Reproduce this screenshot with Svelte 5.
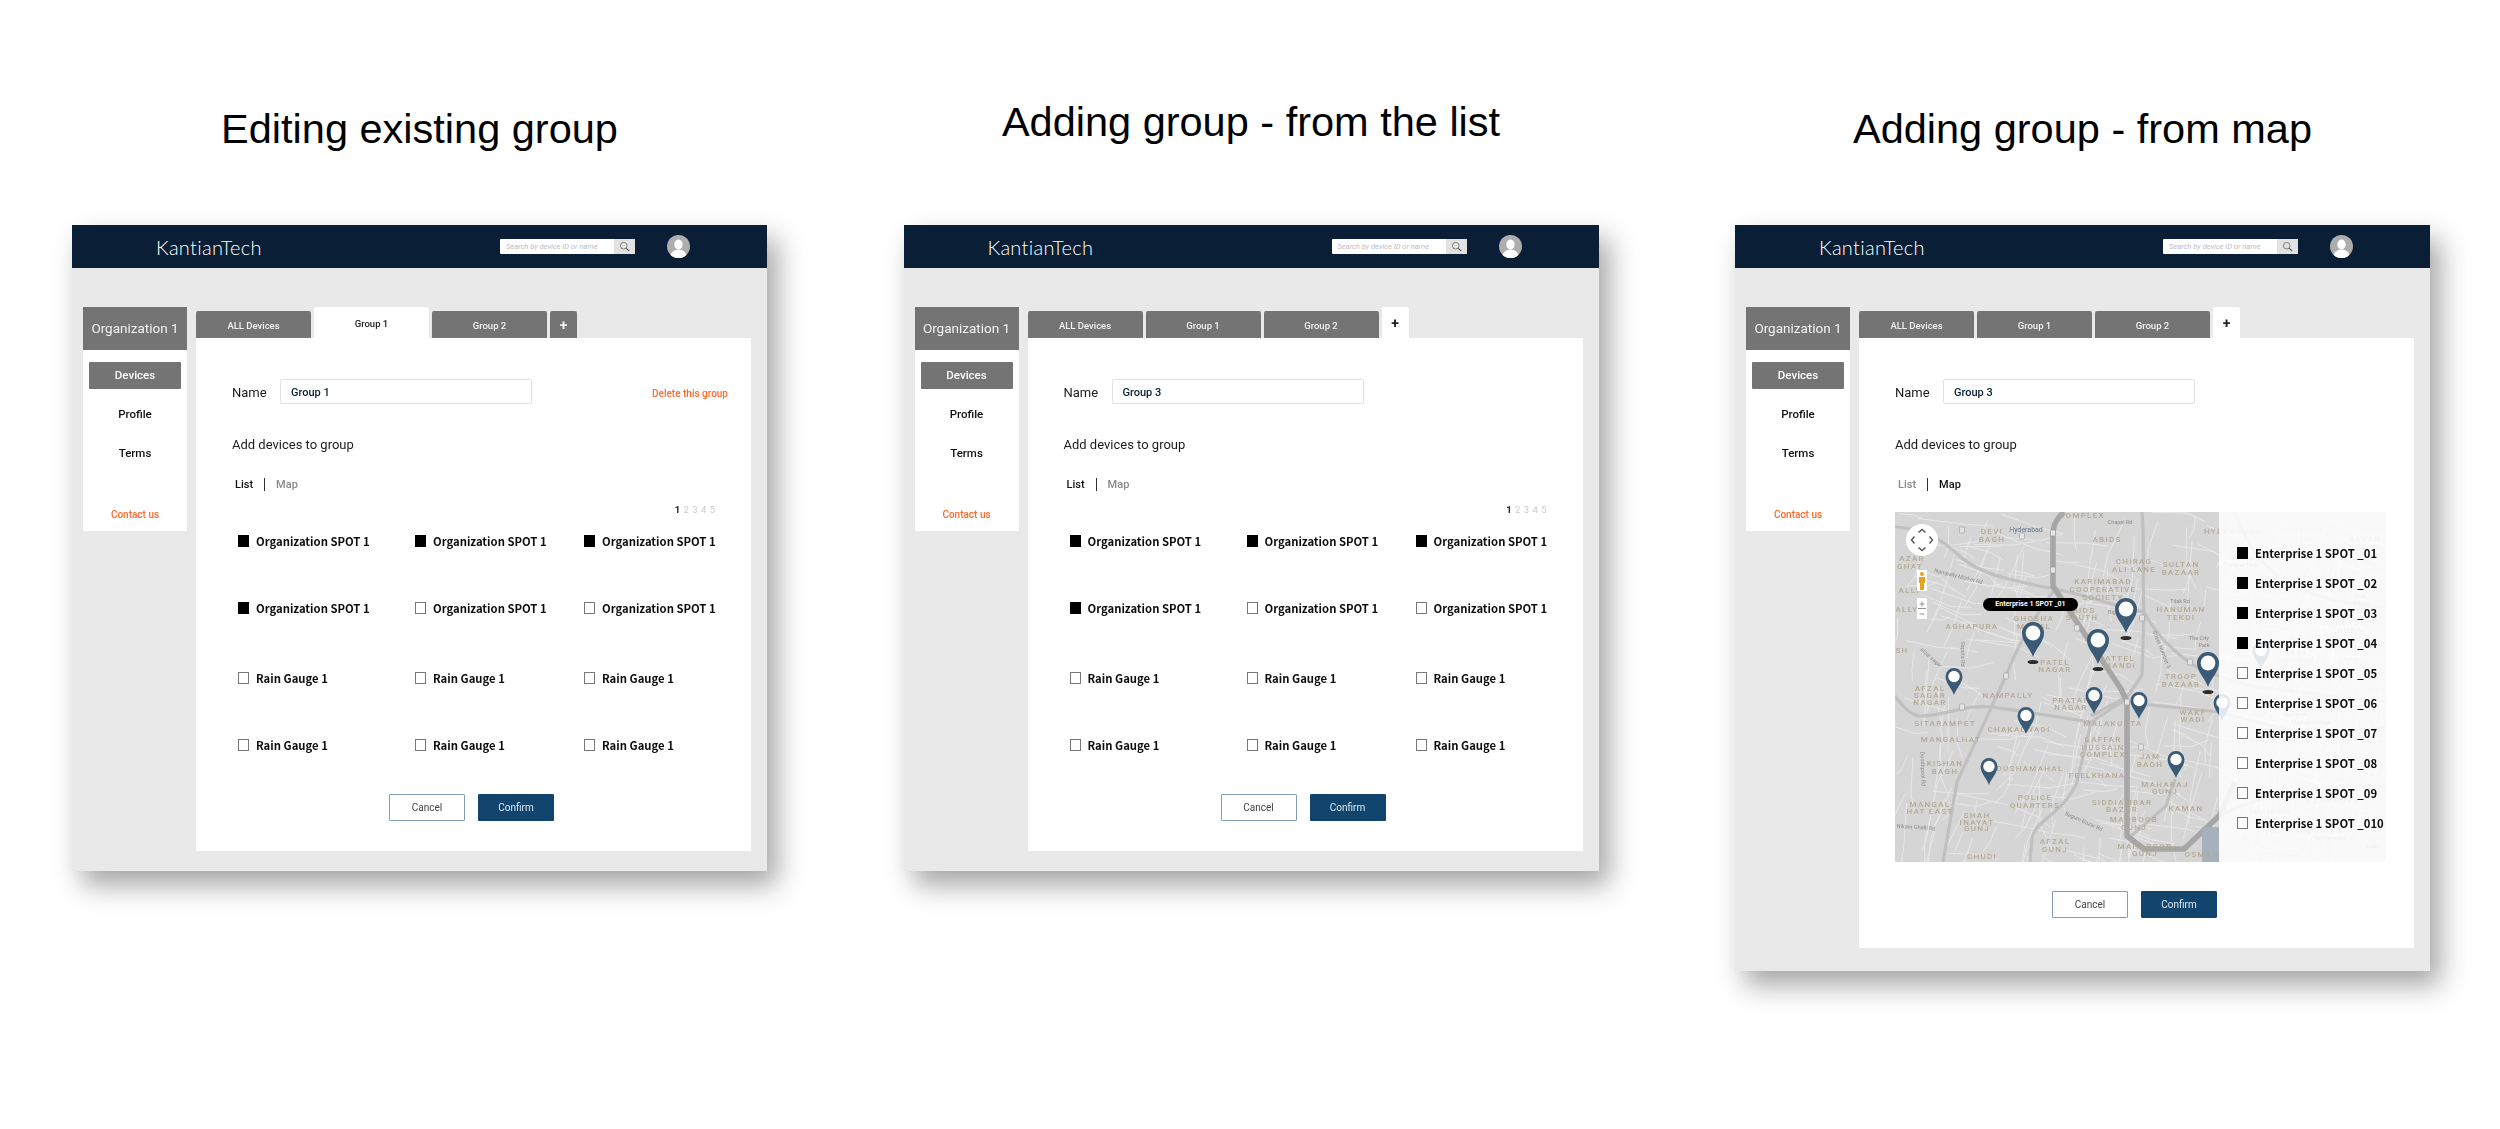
<script>
  const orgRows = [
    ["Organization SPOT 1", true],
    ["Organization SPOT 1", true],
    ["Organization SPOT 1", true],
    ["Organization SPOT 1", true],
    ["Organization SPOT 1", false],
    ["Organization SPOT 1", false],
    ["Rain Gauge 1", false],
    ["Rain Gauge 1", false],
    ["Rain Gauge 1", false],
    ["Rain Gauge 1", false],
    ["Rain Gauge 1", false],
    ["Rain Gauge 1", false]
  ];

  const spots = ["_01", "_02", "_03", "_04", "_05", "_06", "_07", "_08", "_09", "_010"];

  const panels = [
    { title: "Editing existing group", name: "Group 1", activeTab: "Group 1", del: true, view: "list", titleCls: "" },
    { title: "Adding group - from the list", name: "Group 3", activeTab: "+", del: false, view: "list", titleCls: "high" },
    { title: "Adding group - from map", name: "Group 3", activeTab: "+", del: false, view: "map", titleCls: "" }
  ];

  const tabs = ["ALL Devices", "Group 1", "Group 2", "+"];

  // street texture for the map, seeded so it is the same every run
  function makeStreets() {
    let seed = 17;
    const rnd = () => {
      seed = (seed * 16807) % 2147483647;
      return seed / 2147483647;
    };
    const out = [];
    for (let i = 0; i < 420; i++) {
      const x = rnd() * 491;
      const y = rnd() * 350;
      const base = rnd() < 0.5 ? 0.25 : 1.8;
      const a = base + (rnd() - 0.5) * 0.5;
      const len = 12 + rnd() * 36;
      const mx = x + Math.cos(a) * len;
      const my = y + Math.sin(a) * len;
      const a2 = a + (rnd() - 0.5) * 0.9;
      const ex = mx + Math.cos(a2) * len * 0.6;
      const ey = my + Math.sin(a2) * len * 0.6;
      out.push(`M${x.toFixed(1)} ${y.toFixed(1)}L${mx.toFixed(1)} ${my.toFixed(1)}L${ex.toFixed(1)} ${ey.toFixed(1)}`);
    }
    return out.join("");
  }
  const streets = makeStreets();

  const areaLabels = [
    ["COMPLEX", 187, 6], ["DEVI", 97, 22], ["BAGH", 97, 30], ["ABIDS", 212, 30], ["HYDERGUDA", 338, 22],
    ["CHIRAG", 239, 52], ["ALI LANE", 239, 60], ["SULTAN", 286, 55], ["BAZAAR", 286, 63],
    ["KARIMABAD", 208, 72], ["COOPERATIVE", 208, 80], ["SOCIETY", 208, 88],
    ["AZAR", 17, 49], ["GHAT", 15, 57], ["ALLY", 15, 81], ["ALLY", 12, 100],
    ["AGHAPURA", 77, 117], ["GHOSHA", 139, 109], ["MAHAL", 139, 117], ["BIDS", 189, 101], ["SOUTH", 187, 108],
    ["HANUMAN", 286, 100], ["TEKDI", 286, 108], ["PATEL", 160, 153], ["NAGAR", 160, 160],
    ["PATTEL", 222, 149], ["MANDI", 225, 156], ["TROOP", 286, 167], ["BAZAAR", 286, 175],
    ["SH", 7, 141], ["AFZAL", 35, 179], ["SAGAR", 35, 186], ["NAGAR", 35, 193], ["NAMPALLY", 113, 186],
    ["PRATAP", 176, 191], ["NAGAR", 176, 198], ["WAKF", 298, 203], ["WADI", 298, 210],
    ["SITARAMPET", 50, 214], ["MALAKUNTA", 218, 214], ["CHAKALWADI", 124, 220], ["MANGALHAT", 56, 230],
    ["GAFFAR", 208, 230], ["HUSSAIN", 208, 238], ["COMPLEX", 208, 245], ["JAM", 255, 247], ["BAGH", 255, 255],
    ["KISHAN", 50, 254], ["BAGH", 50, 262], ["DUSHAMAHAL", 135, 259], ["FEELKHANA", 202, 266],
    ["MAHARAJ", 270, 275], ["GUNJ", 270, 282], ["POLICE", 140, 288], ["QUARTERS", 140, 296],
    ["SIDDIAMBAR", 227, 293], ["BAZAR", 227, 300], ["KAMAN", 291, 299], ["MANGAL", 35, 295], ["HAT EAST", 35, 302],
    ["SHAH", 82, 306], ["INAYAT", 82, 313], ["GUNJ", 82, 319], ["MAHBOOB", 239, 310], ["GUNJ", 239, 318],
    ["AFZAL", 160, 332], ["GUNJ", 160, 340], ["MAHABOOB", 250, 337], ["GUNJ", 250, 344], ["CHUDI", 87, 347], ["OSMAN", 307, 345],
    ["KUTBI", 455, 113], ["GUDA", 455, 121], ["BADI", 400, 143], ["CHOWDI", 400, 151], ["PUTLIBOWLI", 378, 230],
    ["AZAMPURA", 438, 291], ["IMLIBUN", 375, 302], ["SULTANPURA", 400, 321], ["BASAN", 470, 30], ["NAGAR", 470, 37]
  ];

  const roadLabels = [
    ["Chapel Rd", 225, 12, 0], ["Tilak Rd", 285, 91, 0], ["Nampally Market Rd", 63, 66, 14], ["Street Number 5", 265, 138, 68],
    ["afzal sagar", 35, 147, 42], ["Sapota Rd", 66, 142, 90], ["Doodhpool Rd", 26, 257, 88], ["Begum Bazar Rd", 188, 311, 24],
    ["Nikam Ghalli Rd", 21, 317, 4], ["The City", 304, 128, 0], ["Park", 309, 135, 0], ["Big", 217, 102, 0],
    ["Hotel", 465, 86, 0], ["Arihant", 466, 93, 0], ["Osmania", 400, 204, 0], ["Medical College", 416, 212, 0],
    ["The Hamdam", 434, 328, 0], ["Daily", 478, 336, 0], ["Overhead", 349, 48, 0], ["Water Tank", 349, 55, 0]
  ];

  // little route shields along the roads
  const shields = [[67, 18], [127, 24], [158, 21], [158, 58], [182, 116], [247, 106], [111, 164], [67, 195], [232, 190], [295, 150], [246, 235]];

  const bigPins = [[138, 145], [203, 152], [231, 121], [313, 175]];
  const smallPins = [[59, 183], [199, 202], [244, 207], [131, 222], [94, 273], [281, 266], [327, 209], [366, 157]];
</script>

{#snippet pin(x, y, scale)}
  <g transform="translate({x} {y}) scale({scale})">
    <path d="M0 0C-3-9-11-15-11-24A11 11 0 1 1 11-24C11-15 3-9 0 0Z" fill="#3a5a76" />
    <circle cx="0" cy="-24" r="7.4" fill="#fff" />
  </g>
{/snippet}

{#snippet mapView()}
  <div class="map">
    <svg class="map-art" viewBox="0 0 491 350" width="491" height="350" xmlns="http://www.w3.org/2000/svg">
      <rect width="491" height="350" fill="#d5d5d5" />
      <path d={streets} fill="none" stroke="#e9e9e9" stroke-width="0.9" />

      <!-- Roads -->
      <g fill="none" stroke="#c0c0c0" stroke-width="3.2" stroke-linejoin="round">
        <path d="M0 15C22 16 40 22 60 40C78 58 100 66 160 77C195 84 225 96 249 100" />
        <path d="M247 0C250 30 247 70 249 100C262 125 280 140 294 150C305 158 315 162 360 175L491 190" />
        <path d="M0 184C8 196 18 204 26 204C50 204 70 192 97 195L196 210L227 190L324 200L420 225L491 215" />
        <path d="M160 77C135 110 120 140 111 164L97 194L62 270L48 350" />
        <path d="M196 210L182 270C170 300 138 310 137 327L135 350" />
        <path d="M249 100L247 163L233 184L196 204" />
        <path d="M280 267L271 294L236 324" />
        <path d="M340 0C360 60 400 90 491 95" />
        <path d="M324 304C370 280 430 270 491 275" />
      </g>
      <path d="M169 0C160 8 158 14 158 24V74L226 177L232 190V324L249 337H289L324 304L340 270" fill="none" stroke="#a6a6a6" stroke-width="5.5" stroke-linejoin="round" />
      <rect x="307" y="315" width="17" height="35" fill="#a5b1bd" />
      {#each shields as [x, y]}
        <rect x={x - 2.5} y={y - 3} width="5" height="6" rx="1" fill="#e4e4e4" stroke="#999" stroke-width="0.6" />
      {/each}

      <!-- Labels -->
      <g class="area">
        {#each areaLabels as [t, x, y]}
          <text {x} {y} text-anchor="middle">{t}</text>
        {/each}
      </g>
      <g class="road">
        {#each roadLabels as [t, x, y, r]}
          <text {x} {y} text-anchor="middle" transform="rotate({r} {x} {y})">{t}</text>
        {/each}
      </g>
      <text class="city" x="131" y="20" text-anchor="middle">Hyderabad</text>

      <!-- Pins -->
      {#each bigPins as [x, y]}
        <ellipse cx={x} cy={y + 5} rx="5.5" ry="2" fill="#2b2b2b" />
        {@render pin(x, y, 1)}
      {/each}
      {#each smallPins as [x, y]}
        {@render pin(x, y, 0.77)}
      {/each}

      <!-- Map controls -->
      <circle cx="27" cy="28" r="16" fill="#fff" />
      <path d="M23.500 20.500l3.500-3 3.500 3M23.500 35.500l3.500 3 3.500-3M19.500 24.500l-3 3.500 3 3.500M34.500 24.500l3 3.500-3 3.500" fill="none" stroke="#555" stroke-width="1.400" />
      <rect x="22" y="58" width="10" height="21" rx="1" fill="#fff" />
      <circle cx="27" cy="62" r="2" fill="#e9a21b" />
      <path d="M24 65h6v6h-1v7h-4v-7h-1z" fill="#e9a21b" />
      <rect x="22" y="86" width="10" height="21" rx="1" fill="#fff" />
      <path d="M24.500 92h5M27 89.500v5M24.500 102h5M23 96.500h8" stroke="#888" stroke-width="0.900" fill="none" />

      <!-- Side list backdrop -->
      <rect x="324" y="0" width="167" height="350" fill="#fff" fill-opacity="0.86" />
    </svg>

    <div class="map-tip">Enterprise 1 SPOT _01</div>

    <ul class="spot-list">
      {#each spots as s, i}
        <li class="device">
          <span class="check" class:on={i < 4}></span>
          <span>Enterprise 1 SPOT {s}</span>
        </li>
      {/each}
    </ul>
  </div>
{/snippet}

{#snippet listView()}
  <div class="pager"><b>1</b> 2 3 4 5</div>
  <div class="device-grid">
    {#each orgRows as [label, on]}
      <div class="device">
        <span class="check" class:on></span>
        <span>{label}</span>
      </div>
    {/each}
  </div>
{/snippet}

<div class="page">
  {#each panels as p}
    <section class="col">
      <h1 class={p.titleCls}>{p.title}</h1>
      <div class="window">
        <header class="topbar">
          <div class="logo">KantianTech</div>
          <div class="search">
            <span class="placeholder">Search by device ID or name</span>
            <span class="search-btn">
              <svg viewBox="0 0 14 14" width="11" height="11">
                <circle cx="6" cy="6" r="4.2" fill="none" stroke="#666" stroke-width="1" />
                <path d="M9 9l4 4" stroke="#555" stroke-width="1.300" />
              </svg>
            </span>
          </div>
          <svg class="avatar" viewBox="0 0 23 23" width="23" height="23">
            <defs><clipPath id="av"><circle cx="11.500" cy="11.500" r="11.500" /></clipPath></defs>
            <circle cx="11.500" cy="11.500" r="11.500" fill="#adadad" />
            <g clip-path="url(#av)" fill="#fff">
              <ellipse cx="11.500" cy="9.500" rx="4.200" ry="5" />
              <ellipse cx="11.500" cy="21" rx="8" ry="6.500" />
            </g>
          </svg>
        </header>

        <div class="body" class:tall={p.view === "map"}>
          <aside class="side">
            <div class="org">Organization 1</div>
            <nav class="menu">
              <span class="menu-item current">Devices</span>
              <span class="menu-item">Profile</span>
              <span class="menu-item">Terms</span>
              <span class="contact">Contact us</span>
            </nav>
          </aside>

          <div class="main">
            <div class="tabs">
              {#each tabs as t}
                <span class="tab" class:plus={t === "+"} class:active={t === p.activeTab}>{t}</span>
              {/each}
            </div>
            <div class="content">
              <div class="name-row">
                <label class="name-label" for="n-{p.title}">Name</label>
                <input id="n-{p.title}" class="name-input" value={p.name} />
                {#if p.del}<span class="delete">Delete this group</span>{/if}
              </div>

              <div class="add-title">Add devices to group</div>

              <div class="switch">
                <span class:on={p.view === "list"}>List</span>
                <i></i>
                <span class:on={p.view === "map"}>Map</span>
              </div>

              {#if p.view === "map"}
                {@render mapView()}
              {:else}
                {@render listView()}
              {/if}

              <div class="actions">
                <button class="btn cancel">Cancel</button>
                <button class="btn confirm">Confirm</button>
              </div>
            </div>
          </div>
        </div>
      </div>
    </section>
  {/each}
</div>

<style>
  :global(body) {
    margin: 0;
    background: #fff;
  }

  .page {
    display: flex;
    gap: 136.500px;
    padding-left: 72px;
    height: 1129px;
    box-sizing: border-box;
    overflow: hidden;
    font-family: Roboto, "Liberation Sans", sans-serif;
    color: #1b1b1b;
  }

  .col {
    width: 695px;
    flex: none;
  }

  h1 {
    height: 225px;
    margin: 0;
    padding-top: 106px;
    box-sizing: border-box;
    text-align: center;
    font: 400 41.500px/46px "Liberation Sans", Arial, sans-serif;
    color: #000;
    white-space: nowrap;
  }

  h1.high {
    padding-top: 99px;
  }

  .window {
    background: #e9e9e9;
    box-shadow: 10px 14px 26px rgba(0, 0, 0, 0.36);
    filter: blur(0.35px);
  }

  .topbar {
    display: flex;
    align-items: center;
    height: 43px;
    background: #0a1f35;
    padding-left: 84px;
    padding-right: 77px;
  }

  .logo {
    font-family: Lato, sans-serif;
    font-weight: 300;
    font-size: 20px;
    letter-spacing: 0.3px;
    color: #fff;
  }

  .search {
    display: flex;
    align-items: stretch;
    width: 135px;
    height: 15px;
    margin-left: auto;
    background: #fff;
    border-radius: 1px;
    overflow: hidden;
  }

  .placeholder {
    flex: 1;
    padding-left: 6px;
    font-size: 7.500px;
    line-height: 15px;
    font-style: italic;
    color: #bdbdbd;
    white-space: nowrap;
  }

  .search-btn {
    width: 21px;
    background: #e2e2e2;
    display: flex;
    align-items: center;
    justify-content: center;
  }

  .avatar {
    margin-left: 32px;
  }

  .body {
    display: flex;
    gap: 9px;
    padding: 39px 16px 20px 11px;
    align-items: flex-start;
  }

  .body.tall {
    padding-bottom: 23px;
  }

  .side {
    width: 104px;
    flex: none;
    background: #fff;
    border-radius: 1px;
  }

  .org {
    height: 43px;
    line-height: 43px;
    background: #747474;
    color: #f2f2f2;
    text-align: center;
    font-size: 13.500px;
  }

  .menu {
    display: flex;
    flex-direction: column;
    align-items: center;
    gap: 12px;
    height: 181px;
    padding: 12px 6px 0;
    box-sizing: border-box;
  }

  .menu-item {
    width: 100%;
    height: 27px;
    line-height: 27px;
    text-align: center;
    font-size: 11.500px;
    font-weight: 500;
    color: #111;
  }

  .menu-item.current {
    background: #747474;
    color: #fff;
    border-radius: 1px;
  }

  .contact {
    margin-top: 30px;
    font-size: 10px;
    font-weight: 500;
    color: #ff6a2b;
  }

  .main {
    flex: 1;
    min-width: 0;
  }

  .tabs {
    display: flex;
    align-items: flex-end;
    gap: 3px;
    height: 31px;
  }

  .tab {
    width: 115px;
    height: 27px;
    line-height: 29px;
    text-align: center;
    background: #747474;
    color: #f2f2f2;
    font-size: 9.500px;
    font-weight: 500;
    border-radius: 2px 2px 0 0;
  }

  .tab.plus {
    width: 27px;
    font-size: 14px;
    font-weight: 700;
  }

  .tab.active {
    height: 31px;
    line-height: 33px;
    background: #fff;
    color: #222;
  }

  .content {
    background: #fff;
    padding: 41px 36px 30px;
    border-radius: 0 1px 1px 1px;
  }

  .name-row {
    display: flex;
    align-items: center;
    height: 25px;
  }

  .name-label {
    width: 48px;
    padding-top: 2px;
    font-size: 13px;
  }

  .name-input {
    width: 252px;
    height: 25px;
    box-sizing: border-box;
    padding: 2px 0 0 10px;
    border: 1px solid #e2e2e2;
    border-radius: 2px;
    outline: none;
    font: 500 11px Roboto, sans-serif;
    color: #0a1f35;
  }

  .delete {
    margin-left: auto;
    margin-right: -13px;
    padding-top: 3px;
    font-size: 10px;
    font-weight: 500;
    color: #ff6a2b;
  }

  .add-title {
    margin-top: 33px;
    height: 16px;
    line-height: 16px;
    font-size: 13px;
  }

  .switch {
    display: flex;
    align-items: center;
    gap: 11px;
    height: 16px;
    margin-top: 23px;
    padding-left: 3px;
    font-size: 11px;
    font-weight: 500;
    color: #8a8a8a;
  }

  .switch .on {
    color: #111;
  }

  .switch i {
    width: 1px;
    height: 13px;
    background: #333;
  }

  .pager {
    margin-top: 12px;
    height: 12px;
    line-height: 12px;
    text-align: right;
    font-size: 9.500px;
    color: #c9c9c9;
    word-spacing: 1px;
  }

  .pager b {
    color: #222;
  }

  .device-grid {
    display: grid;
    grid-template-columns: 177px 169px 1fr;
    grid-template-rows: 67px 70px 67px 18px;
    margin-top: 16px;
    padding-left: 6px;
  }

  .device {
    display: flex;
    align-items: center;
    gap: 7px;
    height: 18px;
    font: 700 11.300px "Noto Sans CJK SC", "Noto Sans", sans-serif;
    color: #0c0c0c;
    white-space: nowrap;
  }

  .check {
    flex: none;
    width: 11px;
    height: 12px;
    box-sizing: border-box;
    border: 1px solid #777;
    background: #fff;
  }

  .check.on {
    background: #000;
    border-color: #000;
  }

  .actions {
    display: flex;
    justify-content: center;
    gap: 13px;
    margin-top: 40px;
    padding-right: 4px;
  }

  .btn {
    width: 76px;
    height: 27px;
    padding: 0;
    box-sizing: border-box;
    border-radius: 1px;
    font: 400 10px Roboto, sans-serif;
    cursor: pointer;
  }

  .cancel {
    background: #fff;
    border: 1px solid #7f9db8;
    color: #444;
  }

  .confirm {
    background: #11456e;
    border: 1px solid #11456e;
    color: #dfe8ef;
  }

  .map {
    position: relative;
    width: 491px;
    height: 350px;
    margin-top: 20px;
    margin-bottom: -11px;
  }

  .map-art {
    display: block;
  }

  .map-art text {
    font-family: Roboto, sans-serif;
  }

  .area text {
    font-size: 8px;
    letter-spacing: 1.300px;
    fill: #b3aa94;
    font-weight: 500;
  }

  .road text {
    font-size: 5.500px;
    fill: #8b8b8b;
  }

  .map-art .city {
    font-size: 7px;
    fill: #62788f;
  }

  .map-tip {
    position: absolute;
    left: 88px;
    top: 86px;
    width: 95px;
    height: 13px;
    line-height: 13px;
    text-align: center;
    background: #000;
    color: #fff;
    border-radius: 7px;
    font-size: 7px;
    font-weight: 700;
  }

  .spot-list {
    position: absolute;
    left: 342px;
    top: 32px;
    margin: 0;
    padding: 0;
    list-style: none;
    display: flex;
    flex-direction: column;
    gap: 12px;
  }
</style>
